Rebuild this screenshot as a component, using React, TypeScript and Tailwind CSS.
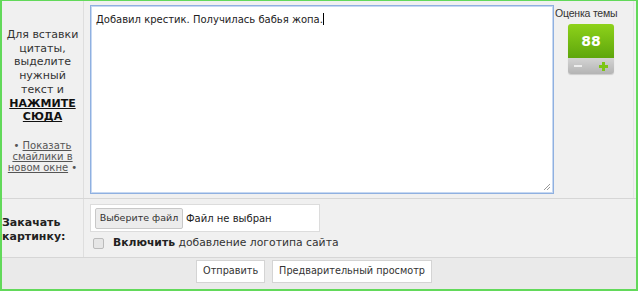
import React from "react";

export default function App() {
  const font = { fontFamily: '"DejaVu Sans", Verdana, sans-serif' };
  return (
    <div
      className="w-[640px] h-[291px] bg-white overflow-hidden text-[#222]"
      style={font}
    >
      <div className="w-[638px] h-[291px] border-l-2 border-t border-r-2 border-b-2 border-[#62d95a] bg-[#f0f0f0] flex flex-col">
        {/* Row 1 */}
        <div className="flex h-[198px] border-b border-[#d6d6d6]">
          <div className="w-[82px] border-r border-[#dedede] flex flex-col items-center justify-center text-center text-[11px] leading-[13.7px] text-[#333] pt-[2px]">
            <div>
              Для вставки
              <br />
              цитаты,
              <br />
              выделите
              <br />
              нужный
              <br />
              текст и
              <br />
              <span className="font-bold underline text-[#111]">НАЖМИТЕ</span>
              <br />
              <span className="font-bold underline text-[#111]">СЮДА</span>
            </div>
            <div className="mt-[16px] text-[10px] leading-[11px] text-[#555]">
              • <span className="underline">Показать</span>
              <br />
              <span className="underline">смайлики в</span>
              <br />
              <span className="underline">новом окне</span> •
            </div>
          </div>
          <div className="w-[469px] pl-[6px] pt-[4px]">
            <div className="w-[464px] h-[189px] bg-white border border-[#8fb0e0] shadow-[inset_0_0_0_1px_#c6d8f2] relative px-[5px] pt-[6px] text-[10px] text-[#222]">
              Добавил крестик. Получилась бабья жопа.
              <span className="inline-block w-[1px] h-[12px] bg-black align-[-2px]" />
              <svg
                className="absolute right-[2px] bottom-[2px]"
                width="8"
                height="8"
                viewBox="0 0 8 8"
              >
                <path d="M7 1 L1 7 M7 4 L4 7" stroke="#999" strokeWidth="1" />
              </svg>
            </div>
          </div>
          <div className="w-[81px] border-r border-[#e4e4e4] flex flex-col items-start pt-[5px]">
            <div
              className="text-[10.5px] text-[#333] leading-[14px] whitespace-nowrap pl-[2px] tracking-[-0.2px]"
              style={{ fontFamily: '"Liberation Sans", Arial, sans-serif' }}
            >
              Оценка темы
            </div>
            <div className="ml-[15px] mt-[4px] w-[46px] h-[50px] rounded-[3px] overflow-hidden flex flex-col shadow-[0_1px_1px_rgba(0,0,0,0.15)]">
              <div className="h-[34px] bg-gradient-to-b from-[#8ed21a] to-[#5ea60c] flex items-center justify-center text-white font-bold text-[14px]">
                88
              </div>
              <div className="h-[16px] bg-gradient-to-b from-[#d4d4d4] to-[#b4b4b4] flex items-center justify-between px-[6px]">
                <span className="w-[8px] h-[2px] bg-[#eee]" />
                <span className="relative w-[9px] h-[9px]">
                  <span className="absolute left-0 top-[3px] w-[9px] h-[3px] bg-[#7cc515]" />
                  <span className="absolute left-[3px] top-0 w-[3px] h-[9px] bg-[#7cc515]" />
                </span>
              </div>
            </div>
          </div>
          <div className="flex-1" />
        </div>
        {/* Row 2 */}
        <div className="flex h-[59px] border-b border-[#d6d6d6]">
          <div className="w-[82px] border-r border-[#dedede] flex items-center font-bold text-[11px] leading-[14px] text-[#222] pt-[4px]">
            <div>
              Закачать
              <br />
              картинку:
            </div>
          </div>
          <div className="pl-[6px] pt-[5px]">
            <div className="w-[230px] h-[28px] bg-white border border-[#dcdcdc] flex items-center pl-[4px] gap-[3px]">
              <div className="h-[21px] w-[88px] justify-center bg-[#ececec] border border-[#c8c8c8] rounded-[2px] flex items-center text-[9.5px] text-[#333]">
                Выберите файл
              </div>
              <span className="text-[10px] text-[#222]">Файл не выбран</span>
            </div>
            <div className="flex items-center mt-[3px] ml-[3px] text-[10.8px] text-[#333]">
              <span className="w-[11px] h-[11px] rounded-[2px] border border-[#bbb] bg-[#e6e6e6]" />
              <span className="ml-[9px]">
                <b className="text-[#222]">Включить</b> добавление логотипа сайта
              </span>
            </div>
          </div>
        </div>
        {/* Row 3 */}
        <div className="flex-1 bg-[#eaeaea] flex items-start justify-center gap-[7px] pt-[2px] pr-[10px]">
          <div className="h-[23px] px-[6px] bg-white border border-[#d4d4d4] flex items-center text-[9.7px] text-[#333]">
            Отправить
          </div>
          <div className="h-[23px] px-[6px] bg-white border border-[#d4d4d4] flex items-center text-[9.7px] text-[#333]">
            Предварительный просмотр
          </div>
        </div>
      </div>
    </div>
  );
}
